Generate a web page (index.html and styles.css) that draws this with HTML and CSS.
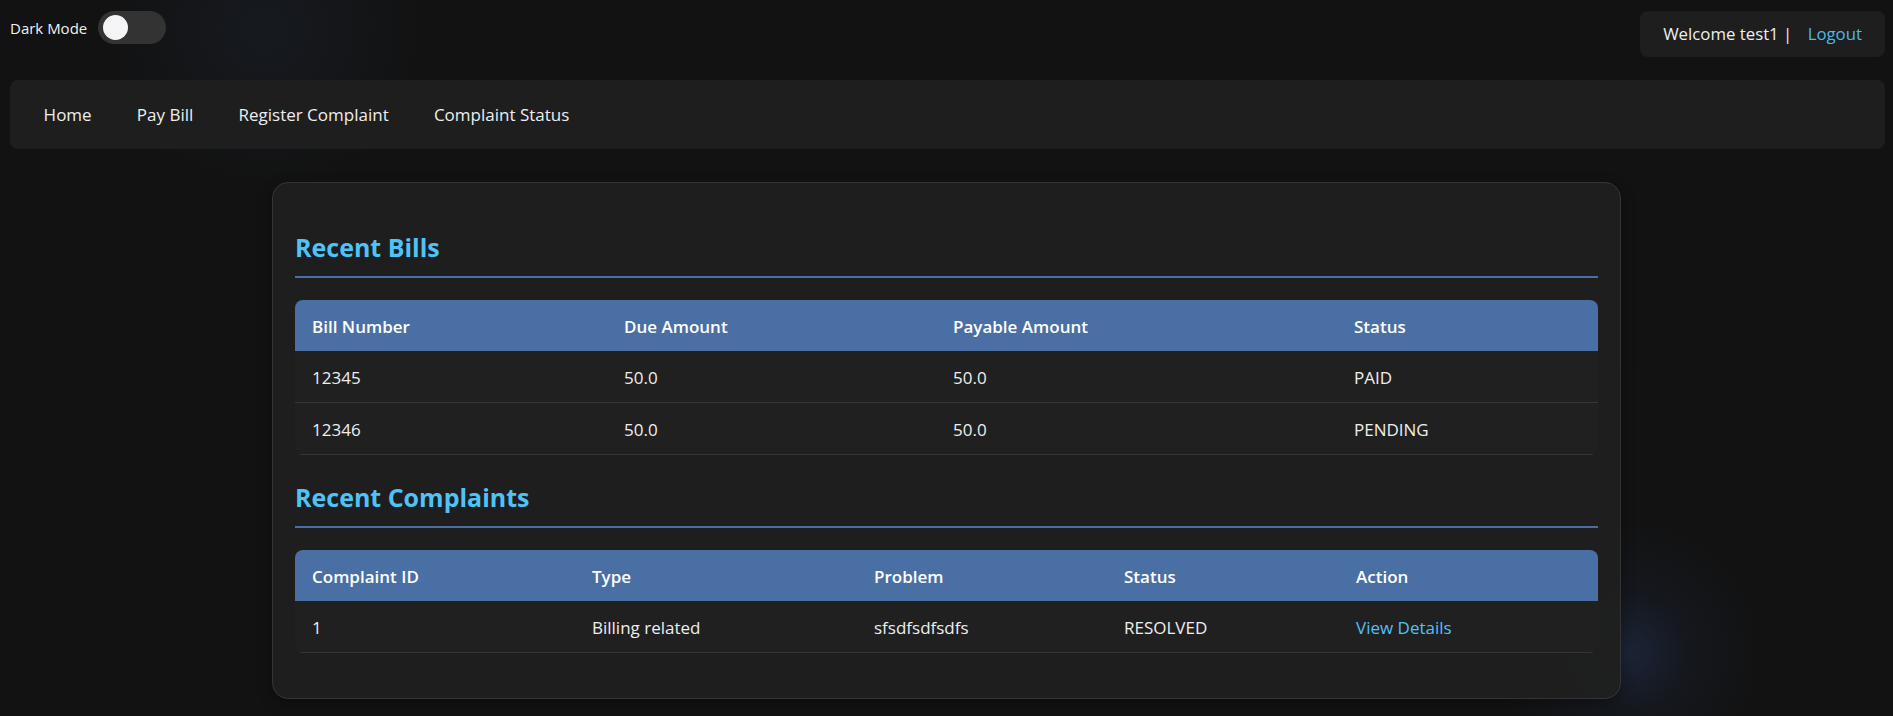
FILE: index.html
```html
<!DOCTYPE html>
<html lang="en">
<head>
<meta charset="utf-8">
<title>Dashboard</title>
<link rel="stylesheet" href="styles.css">
</head>
<body>
<header class="topbar">
  <div class="mode">
    <span class="mode-label">Dark Mode</span>
    <span class="switch"><span class="knob"></span></span>
  </div>
  <div class="welcome">Welcome test1 | <a class="logout" href="#">Logout</a></div>
</header>
<nav class="nav">
  <a href="#">Home</a>
  <a href="#">Pay Bill</a>
  <a href="#">Register Complaint</a>
  <a href="#">Complaint Status</a>
</nav>
<main class="card">
  <section class="section">
    <h2 class="title">Recent Bills</h2>
    <table class="tbl">
      <thead>
        <tr><th class="b1">Bill Number</th><th class="b2">Due Amount</th><th class="b3">Payable Amount</th><th class="b4">Status</th></tr>
      </thead>
      <tbody>
        <tr><td>12345</td><td>50.0</td><td>50.0</td><td>PAID</td></tr>
        <tr><td>12346</td><td>50.0</td><td>50.0</td><td>PENDING</td></tr>
      </tbody>
    </table>
  </section>
  <section class="section">
    <h2 class="title">Recent Complaints</h2>
    <table class="tbl">
      <thead>
        <tr><th class="k1">Complaint ID</th><th class="k2">Type</th><th class="k3">Problem</th><th class="k4">Status</th><th class="k5">Action</th></tr>
      </thead>
      <tbody>
        <tr><td>1</td><td>Billing related</td><td>sfsdfsdfsdfs</td><td>RESOLVED</td><td><a class="link" href="#">View Details</a></td></tr>
      </tbody>
    </table>
  </section>
</main>
</body>
</html>
```
FILE: styles.css
```css
html, body { height: 100%; }
body {
  margin: 0;
  min-height: 716px;
  background-color: #121212;
  background-image:
    radial-gradient(circle at 1628px 652px, rgba(38, 58, 100, 0.45) 0, rgba(30, 44, 74, 0.2) 60px, rgba(18, 18, 18, 0) 135px),
    radial-gradient(circle at 265px 30px, rgba(30, 40, 58, 0.35) 0, rgba(18, 18, 18, 0) 160px),
    radial-gradient(circle at 1500px 450px, rgba(34, 38, 48, 0.22) 0, rgba(18, 18, 18, 0) 160px);
  background-repeat: no-repeat;
  color: #e8e8e8;
  font-family: "Open Sans", "Noto Sans", sans-serif;
  overflow: hidden;
}
a { text-decoration: none; }

.topbar {
  display: flex;
  justify-content: space-between;
  align-items: flex-start;
  padding: 11px 8px 0 10px;
}
.mode {
  display: flex;
  align-items: center;
  gap: 11px;
}
.mode-label {
  font-size: 15px;
  color: #f0f0f0;
}
.switch {
  width: 68px;
  height: 33px;
  border-radius: 17px;
  background: #333333;
  display: flex;
  align-items: center;
  padding-left: 5px;
  box-sizing: border-box;
}
.knob {
  width: 25px;
  height: 25px;
  border-radius: 50%;
  background: #f5f5f7;
}
.welcome {
  background: #1e1e1e;
  border-radius: 8px;
  padding: 11px 23px 12px 23px;
  font-size: 16.8px;
  line-height: 23px;
  color: #eeeeee;
  white-space: pre;
}
.logout {
  color: #4fb8e8;
  margin-left: 11px;
}

.nav {
  display: flex;
  margin: 23px 8px 0 10px;
  padding: 23px 11px;
  background: #1e1e1e;
  border-radius: 8px;
}
.nav a {
  color: #eeeeee;
  font-size: 17px;
  line-height: 23px;
  padding: 0 22.6px;
}

.card {
  display: block;
  width: 1349px;
  box-sizing: border-box;
  margin: 33px auto 0 auto;
  padding: 48px 22px 45px 22px;
  background: rgba(31, 31, 31, 0.96);
  border: 1px solid #343434;
  border-radius: 16px;
  box-shadow: 0 4px 14px rgba(0, 0, 0, 0.35);
}
.section + .section { margin-top: 26px; }
.title {
  margin: 0 0 22px 0;
  padding-bottom: 13px;
  border-bottom: 2px solid #4a6fa5;
  color: #4fc3f7;
  font-size: 25px;
  line-height: 32px;
  font-weight: 700;
}
.tbl {
  width: 1303px;
  table-layout: fixed;
  border-collapse: separate;
  border-spacing: 0;
  border-radius: 8px;
  overflow: hidden;
  font-size: 17px;
  line-height: 21px;
}
.tbl th {
  box-sizing: border-box;
  background: #4a6fa5;
  color: #ffffff;
  font-weight: 600;
  text-align: left;
  padding: 16px 17px 14px 17px;
}
.tbl td {
  background: #202020;
  color: #eeeeee;
  padding: 16px 17px 14px 17px;
  border-bottom: 1px solid #363636;
}
.b1 { width: 312px; }
.b2 { width: 329px; }
.b3 { width: 401px; }
.b4 { width: 261px; }
.k1 { width: 280px; }
.k2 { width: 282px; }
.k3 { width: 250px; }
.k4 { width: 232px; }
.k5 { width: 259px; }
.link { color: #4fc3f7; }
```
